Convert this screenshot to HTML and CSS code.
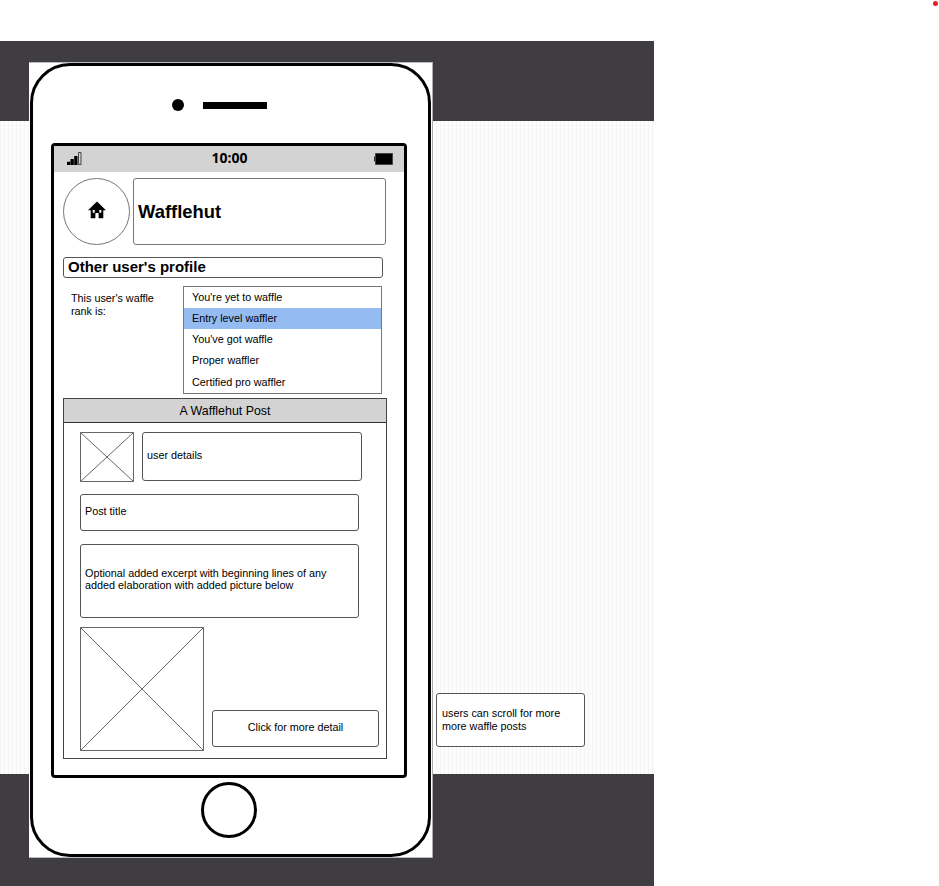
FILE: index.html
```
<!DOCTYPE html>
<html lang="en">
<head>
<meta charset="utf-8">
<title>Wafflehut</title>
<link rel="stylesheet" href="styles.css">
</head>
<body>
<span class="marker"></span>
<main class="canvas">
  <div class="plate">
    <div class="device">
      <div class="earpiece"><span class="camera"></span><span class="speaker"></span></div>
      <div class="screen">
        <div class="status">
          <svg class="signal" width="15" height="13" viewBox="0 0 15 13"><path d="M0 9.7h3.2V13H0zM3.5 7h3.3v6H3.5zM7.2 4h3.3v9H7.2z"/><path d="M11.5 .5h2.5v12h-2.5z" fill="none" stroke="#333" stroke-width=".9"/></svg>
          <span class="time">10:00</span>
          <svg class="battery" width="19" height="12" viewBox="0 0 19 12"><path d="M0 3.5h2v5H0z" fill="#333"/><path d="M1.5 .5h17v11h-17z" stroke="#444"/></svg>
        </div>
        <div class="content">
          <div class="header">
            <div class="home"><svg width="18" height="18" viewBox="0 0 18 18"><path fill-rule="evenodd" d="M9 .5 0 9.3h2.7V17.2h4.7v-5.1h3.2v5.1h4.7V9.3H18zM4.7 9h2v2.7h-2zM11.3 9h2v2.7h-2z"/></svg></div>
            <h1 class="box brand">Wafflehut</h1>
          </div>
          <h2 class="box profile">Other user's profile</h2>
          <div class="rank">
            <p class="label">This user's waffle<br>rank is:</p>
            <ul class="levels">
              <li>You're yet to waffle</li>
              <li class="selected">Entry level waffler</li>
              <li>You've got waffle</li>
              <li>Proper waffler</li>
              <li>Certified pro waffler</li>
            </ul>
          </div>
          <section class="post">
            <h3>A Wafflehut Post</h3>
            <div class="post-body">
              <div class="author">
                <svg class="picture" width="54" height="50" viewBox="0 0 54 50"><path d="M.5.5h53v49H.5zL53.5 49.5M53.5.5.5 49.5"/></svg>
                <div class="box user">user details</div>
              </div>
              <div class="box title">Post title</div>
              <div class="box excerpt">Optional added excerpt with beginning lines of any<br>added elaboration with added picture below</div>
              <div class="media">
                <svg class="picture" width="124" height="124" viewBox="0 0 124 124"><path d="M.5.5h123v123H.5zL123.5 123.5M123.5.5.5 123.5"/></svg>
                <div class="box more">Click for more detail</div>
              </div>
            </div>
          </section>
        </div>
      </div>
      <div class="home-button"></div>
    </div>
  </div>
  <aside class="box note">users can scroll for more<br>more waffle posts</aside>
</main>
</body>
</html>
```
FILE: styles.css
```
* { box-sizing: border-box; }
body {
  margin: 0;
  height: 886px;
  overflow: hidden;
  background: #fff;
  color: #000;
  font: 10.8px/13px "Liberation Sans", Arial, sans-serif;
}
h1, h2, h3, p, ul { margin: 0; padding: 0; }
svg { display: block; flex: none; }

.marker {
  position: absolute;
  top: 1px;
  right: 1px;
  width: 5px;
  height: 5px;
  border-radius: 50%;
  background: #ec1c24;
}

.canvas {
  display: flex;
  align-items: flex-start;
  width: 654px;
  height: 845px;
  margin-top: 41px;
  padding: 21px 0 0 29px;
  background:
    linear-gradient(#3f3d42, #3f3d42) 0 0 / 100% 80px no-repeat,
    linear-gradient(#3f3d42, #3f3d42) 0 100% / 100% 112px no-repeat,
    repeating-linear-gradient(90deg, rgba(0,0,0,.03) 0 1px, transparent 1px 4px),
    repeating-linear-gradient(rgba(0,0,0,.012) 0 1px, transparent 1px 4px),
    #fdfdfd;
}
.plate {
  flex: none;
  width: 404px;
  height: 796px;
  padding: 1px;
  background: #fff;
  box-shadow: inset 0 1px #bbb, inset -1px 0 #aaa, inset 0 -1px #bbb;
}
.device {
  width: 401px;
  height: 794px;
  border: 3px solid #000;
  border-radius: 40px;
}
.earpiece {
  display: flex;
  align-items: center;
  gap: 19px;
  height: 77px;
  padding-left: 139px;
}
.camera { width: 12px; height: 12px; border-radius: 50%; background: #000; }
.speaker { width: 64px; height: 7px; margin-top: 1px; background: #000; }

.screen {
  width: 356px;
  height: 635px;
  margin-left: 18px;
  border: 3px solid #000;
  border-radius: 4px;
}
.status {
  display: flex;
  align-items: center;
  justify-content: space-between;
  height: 26px;
  padding: 0 11px 1px 13px;
  background: #d3d3d3;
}
.time { font: bold 14px/20px "Open Sans", sans-serif; margin: -1px 0 0 3px; }
.content { padding: 6px 17px 0 9px; }

.box {
  display: flex;
  align-items: center;
  padding-left: 4px;
  border: 1px solid #555;
  border-radius: 3px;
  background: #fff;
}
.header { display: flex; gap: 3px; height: 67px; }
.home {
  display: flex;
  align-items: center;
  justify-content: center;
  width: 67px;
  padding: 0 0 3px 0;
  border: 1px solid #777;
  border-radius: 50%;
}
.brand { width: 253px; padding-top: 0; font-size: 18.4px; border-color: #777; }
.profile { width: 320px; height: 21px; margin-top: 12px; font-size: 15px; padding-bottom: 2px; }

.rank { display: flex; margin-top: 8px; }
.label { width: 120px; padding: 6px 0 0 8px; }
.levels {
  width: 199px;
  height: 108px;
  border: 1px solid #777;
  list-style: none;
}
.levels li { height: 21px; padding-left: 8px; line-height: 21px; }
.levels .selected { background: #94bbf2; }
.levels li:last-child { margin-top: 1px; }

.post {
  width: 324px;
  height: 361px;
  margin-top: 4px;
  border: 1px solid #444;
}
.post h3 {
  height: 24px;
  border-bottom: 1px solid #333;
  background: #d3d3d3;
  font-weight: normal;
  font-size: 12.4px;
  line-height: 24px;
  text-align: center;
}
.post-body { padding: 9px 0 0 16px; }
.author { display: flex; gap: 8px; }
.picture path { fill: none; stroke: #666; }
.user { width: 220px; height: 49px; padding-bottom: 2px; }
.title { width: 279px; height: 37px; margin-top: 12px; padding-bottom: 2px; }
.excerpt { width: 279px; height: 74px; margin-top: 13px; padding-bottom: 5px; line-height: 12px; }
.media { display: flex; gap: 8px; align-items: flex-end; margin-top: 9px; }
.more { justify-content: center; width: 167px; height: 37px; margin-bottom: 4px; padding: 0 0 2px; }

.home-button {
  width: 56px;
  height: 56px;
  margin: 4px 0 0 168px;
  border: 3px solid #000;
  border-radius: 50%;
}
.note { flex: none; width: 149px; height: 54px; margin: 631px 0 0 3px; padding-left: 5px; }
```
